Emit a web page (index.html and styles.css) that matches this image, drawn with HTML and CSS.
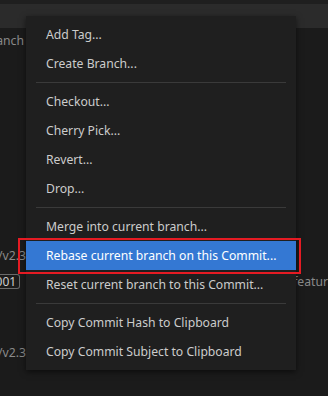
FILE: index.html
```html
<!DOCTYPE html>
<html lang="en">

<head>
    <meta charset="UTF-8">
    <title>Commit context menu</title>
    <link rel="stylesheet" href="styles.css">
</head>

<body>

    <div class="top-strip"></div>
    <div class="header-band"></div>

    <div class="graph">
        <div class="row row-first">
            <div class="cell-left"><span class="ref">anch</span></div>
        </div>
        <div class="row row-tag">
            <div class="cell-left"><span class="ref">/v2.3</span></div>
        </div>
        <div class="row row-badge">
            <div class="cell-left"><span class="badge">001</span></div>
            <div class="cell-right"><span class="ref">featur</span></div>
        </div>
        <div class="row row-last">
            <div class="cell-left"><span class="ref">/v2.3</span></div>
        </div>
    </div>

    <div class="menu">
        <div class="menu-item">Add Tag...</div>
        <div class="menu-item">Create Branch...</div>
        <div class="menu-sep"></div>
        <div class="menu-item">Checkout...</div>
        <div class="menu-item">Cherry Pick...</div>
        <div class="menu-item">Revert...</div>
        <div class="menu-item">Drop...</div>
        <div class="menu-sep"></div>
        <div class="menu-item">Merge into current branch...</div>
        <div class="menu-item selected">Rebase current branch on this Commit...</div>
        <div class="menu-item">Reset current branch to this Commit...</div>
        <div class="menu-sep"></div>
        <div class="menu-item">Copy Commit Hash to Clipboard</div>
        <div class="menu-item">Copy Commit Subject to Clipboard</div>
    </div>

    <!-- annotation box round the selected item -->
    <div class="highlight-box"></div>

</body>

</html>
```

FILE: styles.css
```css
body {
    margin: 0;
    width: 328px;
    height: 396px;
    overflow: hidden;
    background-color: #1b1b1b;
    font-family: "Noto Sans", "Open Sans", sans-serif;
    font-size: 12.2px;
    position: relative;
}

.top-strip {
    height: 4px;
    background-color: #1f1f1f;
}

.header-band {
    height: 24px;
    background-color: #2b2b2b;
}

/* Graph rows behind the menu */
.graph {
    display: flex;
    flex-direction: column;
}

.row {
    display: flex;
    align-items: center;
    height: 20px;
    color: #8a8a8a;
    white-space: nowrap;
}

.row-first {
    margin-top: 2px;
}

.row-tag {
    margin-top: 195px;
}

.row-badge {
    margin-top: 6px;
}

.row-last {
    margin-top: 51px;
}

.cell-left {
    width: 26px;
    display: flex;
    justify-content: flex-end;
    overflow: hidden;
}

.row-first .cell-left {
    width: 24px;
}

.cell-right {
    margin-left: 271px;
}

.badge {
    padding: 0 3px 0 2px;
    margin-right: 2px;
    height: 13px;
    line-height: 13px;
    border: 1px solid #6a6a6a;
    border-left: none;
    border-radius: 0 3px 3px 0;
    color: #cccccc;
    font-size: 12px;
}

/* Context menu */
.menu {
    position: absolute;
    left: 26px;
    top: 16px;
    width: 270px;
    padding: 4px 0;
    background-color: #1f1f1f;
    box-shadow: 0 2px 6px rgba(0, 0, 0, 0.55);
    color: #cccccc;
}

.menu-item {
    height: 29px;
    line-height: 29px;
    padding-left: 20px;
    white-space: nowrap;
}

.menu-item.selected {
    background-color: #3478d3;
    color: #ffffff;
}

.menu-sep {
    height: 1px;
    margin: 4px 10px;
    background-color: #3a3a3a;
}

.highlight-box {
    position: absolute;
    left: 18px;
    top: 238px;
    width: 279px;
    height: 32px;
    border: 2px solid #e51b23;
}
```
